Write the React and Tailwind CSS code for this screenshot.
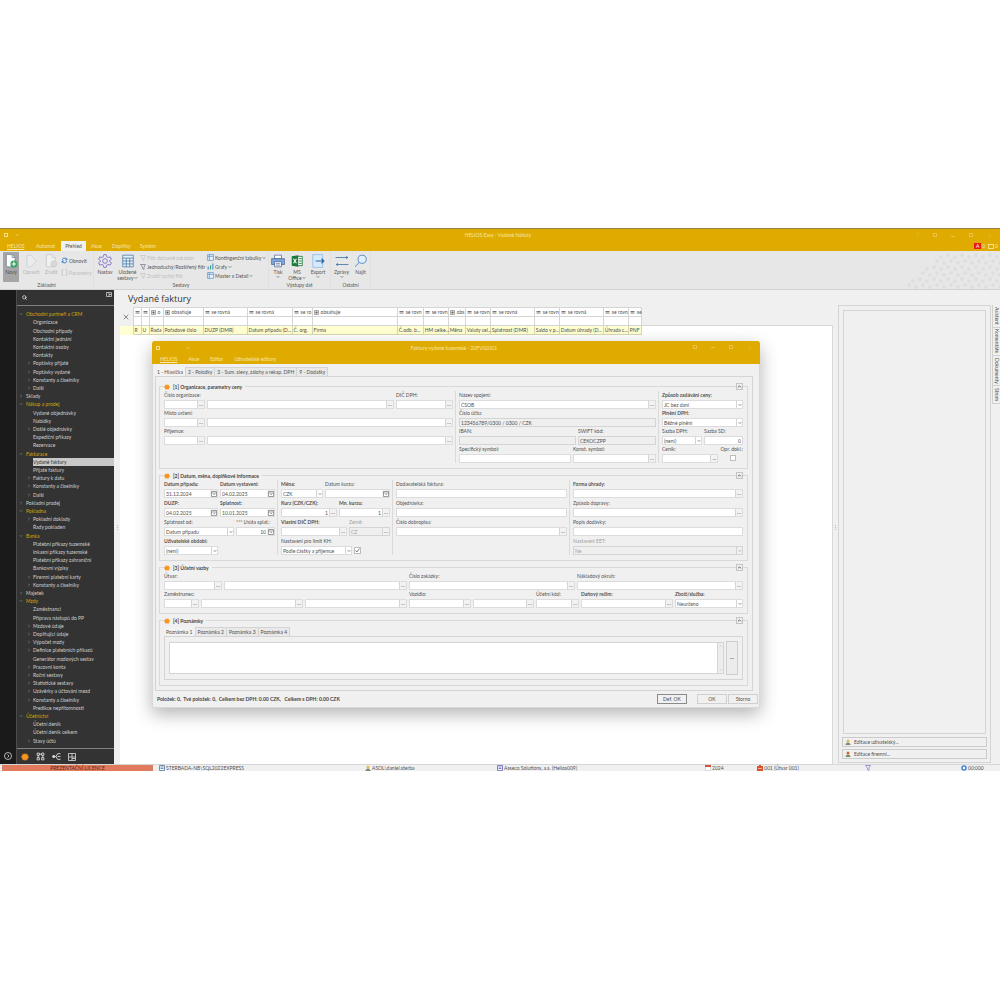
import React, { useId } from "react";
import { ChevronDown, ChevronRight, ChevronUp, Search, X } from "lucide-react";

const TREE = [
  { name: "Obchodní partneři a CRM", items: ["Organizace", "Obchodní případy", "Kontaktní jednání", "Kontaktní osoby", "Kontakty", "+Poptávky přijaté", "+Poptávky vydané", "+Konstanty a číselníky", "+Další"] },
  { name: "Sklady", items: [] },
  { name: "Nákup a prodej", items: ["Vydané objednávky", "Nabídky", "+Došlé objednávky", "Expediční příkazy", "Rezervace"] },
  { name: "Fakturace", items: ["Vydané faktury", "Přijaté faktury", "+Faktury k datu", "+Konstanty a číselníky", "+Další"] },
  { name: "Pokladní prodej", items: [] },
  { name: "Pokladna", items: ["+Pokladní doklady", "Řady pokladen"] },
  { name: "Banka", items: ["Platební příkazy tuzemské", "Inkasní příkazy tuzemské", "Platební příkazy zahraniční", "Bankovní výpisy", "+Firemní platební karty", "+Konstanty a číselníky"] },
  { name: "Majetek", items: [] },
  { name: "Mzdy", items: ["Zaměstnanci", "Příprava nástupů do PP", "+Mzdové údaje", "+Doplňující údaje", "+Výpočet mzdy", "+Definice platebních příkazů", "Generátor mzdových sestav", "+Pracovní konta", "+Roční sestavy", "+Statistické sestavy", "+Uzávěrky a účtování mezd", "+Konstanty a číselníky", "Predikce nepřítomnosti"] },
  { name: "Účetnictví", items: ["Účetní deník", "Účetní deník celkem", "+Stavy účtů"] },
];

const COLUMNS = [
  { w: 8, op: "eq", filter: "", label: "R" },
  { w: 8, op: "eq", filter: "", label: "U" },
  { w: 14, op: "in", filter: "o", label: "Řada" },
  { w: 40, op: "in", filter: "obsahuje", label: "Pořadové číslo" },
  { w: 44, op: "eq", filter: "se rovná", label: "DUZP (DMR)" },
  { w: 45, op: "eq", filter: "se rovná", label: "Datum případu (D..." },
  { w: 20, op: "eq", filter: "se ro", label: "Č. org." },
  { w: 85, op: "in", filter: "obsahuje", label: "Firma" },
  { w: 26, op: "eq", filter: "se rovn", label: "Č.odb. b..." },
  { w: 25, op: "eq", filter: "se rovn", label: "HM celke..." },
  { w: 17, op: "in", filter: "obs", label: "Měna" },
  { w: 25, op: "eq", filter: "se rovn", label: "Valuty cel..." },
  { w: 44, op: "eq", filter: "se rovná", label: "Splatnost (DMR)" },
  { w: 25, op: "eq", filter: "se rovn", label: "Saldo v p..." },
  { w: 44, op: "eq", filter: "se rovná", label: "Datum úhrady (D..." },
  { w: 25, op: "eq", filter: "se rovn", label: "Úhrada c..." },
  { w: 13, op: "eq", filter: "se", label: "PNF" },
];

function Gear({ className }) {
  return (
    <svg viewBox="0 0 16 16" className={className} aria-hidden="true">
      <path
        d="M8 0l2 3 3-2v4l3 1-2 2 2 2-3 1v4l-3-2-2 3-2-3-3 2v-4l-3-1 2-2-2-2 3-1V1l3 2z"
        fill="#f7951f"
      />
    </svg>
  );
}

/* ---------- ribbon ---------- */

function NewIcon() {
  return (
    <svg viewBox="0 0 24 24" className="size-[14px]" fill="none" strokeWidth="1.4">
      <path d="M4 1h10l5 5v16H4z" fill="#fff" stroke="#7d8794" />
      <path d="M14 1v5h5" stroke="#7d8794" />
      <circle cx="17" cy="17" r="6" fill="#2f9e5b" />
      <path d="M17 13v8M13 17h8" stroke="#fff" strokeWidth="1.8" />
    </svg>
  );
}

function EditIcon() {
  return (
    <svg viewBox="0 0 24 24" className="size-[14px]" fill="#ececee" stroke="#d2d2d6" strokeWidth="1.6">
      <path d="M5 2h7l9 10-9 10H5z" />
    </svg>
  );
}

function DeleteIcon() {
  return (
    <svg viewBox="0 0 24 24" className="size-[14px]" fill="#f0f0f0" stroke="#ccccd0" strokeWidth="1.6">
      <path d="M4 1h10l5 5v16H4z" />
      <path d="M14 1v5h5" />
      <circle cx="17" cy="17" r="5" fill="#d8d8dc" />
    </svg>
  );
}

function SettingsIcon() {
  return (
    <svg viewBox="0 0 24 24" className="size-[14px]" fill="none" stroke="#8377c6" strokeWidth="1.6">
      <path d="M10 1h4l1 4 2 1 4-1 2 4-3 2v2l3 2-2 4-4-1-2 1-1 4h-4l-1-4-2-1-4 1-2-4 3-2v-2L1 9l2-4 4 1 2-1z" />
      <circle cx="12" cy="12" r="4" />
    </svg>
  );
}

function SavedIcon() {
  return (
    <svg viewBox="0 0 24 24" className="size-[14px]" fill="#e8f1fa" stroke="#4f7ba8" strokeWidth="1.4">
      <path d="M3 2h18v20H3zM3 7h18M9 7v15M15 7v15M3 12h18M3 17h18" />
    </svg>
  );
}

function PrintIcon() {
  return (
    <svg viewBox="0 0 24 24" className="size-[14px]" stroke="#44628f" strokeWidth="1.2">
      <path d="M6 2h12v6H6z" fill="#fff" />
      <path d="M1 8h22v10H1z" fill="#7fa6dc" />
      <path d="M6 13h12v9H6z" fill="#fff" />
      <path d="M8 16h8M8 19h8" />
    </svg>
  );
}

function ExcelIcon() {
  return (
    <svg viewBox="0 0 24 24" className="size-[14px]">
      <path d="M12 4h9v16h-9z" fill="#fff" stroke="#1d7a3e" strokeWidth="1.5" />
      <path d="M15 8h5M15 12h5M15 16h5" stroke="#1d7a3e" strokeWidth="1.5" />
      <path d="M3 4l11-2v20L3 20z" fill="#1d7a3e" />
      <path d="M6 8l5 8M11 8l-5 8" stroke="#fff" strokeWidth="1.8" />
    </svg>
  );
}

function ExportIcon() {
  return (
    <svg viewBox="0 0 24 24" className="size-[14px]" fill="none">
      <path d="M3 1h17v22H3z" fill="#d6eafc" stroke="#8fbce6" strokeWidth="1.4" />
      <path d="M8 12h14M18 8l4 4-4 4" stroke="#1f62a8" strokeWidth="2" />
    </svg>
  );
}

function MessagesIcon() {
  return (
    <svg viewBox="0 0 24 24" className="size-[14px]" fill="none" stroke="#3d6fa3" strokeWidth="1.4">
      <path d="M1 6h21M19 4l3 2-3 2M23 18H2M5 16l-3 2 3 2" />
    </svg>
  );
}

function FindIcon() {
  return (
    <svg viewBox="0 0 24 24" className="size-[14px]" fill="#e2effb" stroke="#4b86c6" strokeWidth="1.6">
      <circle cx="14" cy="9" r="7" />
      <path d="M9 14L2 22" />
    </svg>
  );
}

function BigButton({ icon, label, second, menu, active, disabled, width }) {
  return (
    <button
      disabled={disabled}
      className={`flex h-[30px] flex-col items-center pt-[2px] leading-[6px] ${width} ${
        active ? "bg-[#a6a6a6]" : ""
      } ${disabled ? "text-[#b4b4b4]" : "text-[#555]"}`}
    >
      {icon}
      <span className="mt-px">{label}</span>
      <span className="flex items-center">
        {second}
        {menu && <ChevronDown className="size-[4px]" strokeWidth={4} />}
      </span>
    </button>
  );
}

function SmallButton({ icon, label, menu, disabled }) {
  return (
    <button
      disabled={disabled}
      className={`flex h-[9px] items-center gap-px whitespace-nowrap ${
        disabled ? "text-[#bcbcbc]" : "text-[#555]"
      }`}
    >
      {icon}
      {label}
      {menu && <ChevronDown className="size-[4px]" strokeWidth={4} />}
    </button>
  );
}

function Funnel({ color }) {
  return (
    <svg viewBox="0 0 12 12" className="size-[6px] shrink-0" fill="none" stroke={color} strokeWidth="1.5">
      <path d="M1 1h10L8 6v5L5 9V6z" />
    </svg>
  );
}

function Pivot({ color = "#5b8fc7" }) {
  return (
    <svg viewBox="0 0 12 12" className="size-[7px] shrink-0" fill="#e6f0fa" stroke={color} strokeWidth="1.2">
      <path d="M1 1h10v10H1zM1 4h10M4 1v10" />
    </svg>
  );
}

function Brackets() {
  return (
    <svg viewBox="0 0 12 12" className="size-[7px] shrink-0" fill="none" stroke="#c4c4c8" strokeWidth="1.4">
      <path d="M4 1H2v10h2M8 1h2v10H8" />
    </svg>
  );
}

function Bars() {
  return (
    <svg viewBox="0 0 12 12" className="size-[7px] shrink-0">
      <path d="M1 6h2v5H1zM9 1h2v10H9z" fill="#4e8fd0" />
      <path d="M5 4h2v7H5z" fill="#39a36a" />
    </svg>
  );
}

function Refresh() {
  return (
    <svg viewBox="0 0 12 12" className="size-[7px] shrink-0" fill="none" stroke="#3a7fc4" strokeWidth="1.6">
      <path d="M2 5l2-3h4l2 3M10 7l-2 3H4L2 7M10 2v3H7M2 10V7h3" />
    </svg>
  );
}

function RibbonGroup({ title, width, children }) {
  return (
    <div className={`flex shrink-0 flex-col border-r border-[#e0e0e0] ${width}`}>
      <div className="flex flex-1">{children}</div>
      <div className="h-[8px] text-center leading-[7px] text-[#555]">{title}</div>
    </div>
  );
}

function Dots() {
  const dots = [];
  for (let r = 0; r < 6; r++) {
    for (let c = 0; c < 14; c++) {
      if (c * 7 < (5 - r) * 6) continue;
      dots.push(<circle key={`${r}-${c}`} cx={c * 7 + (r % 2) * 3 + 2} cy={r * 6 + 4 + (c % 2) * 2} r="2" />);
    }
  }
  return (
    <svg viewBox="0 0 96 38" className="h-[38px] w-[96px]" fill="#dedede" aria-hidden="true">
      {dots}
    </svg>
  );
}

function Ribbon() {
  return (
    <div className="flex h-[39px] border-b border-[#d2d2d2] bg-[#e7e7e7]">
      <RibbonGroup title="Základní" width="w-[94px]">
        <div className="flex gap-[3px] pl-[3px] pt-px">
          <BigButton icon={<NewIcon />} label="Nový" active width="w-[16px]" />
          <BigButton icon={<EditIcon />} label="Opravit" disabled width="w-[18px]" />
          <BigButton icon={<DeleteIcon />} label="Zrušit" disabled width="w-[16px]" />
        </div>
        <div className="flex flex-col gap-[3px] pl-[2px] pt-[5px]">
          <SmallButton icon={<Refresh />} label="Obnovit" />
          <SmallButton icon={<Brackets />} label="Parametry" disabled />
        </div>
      </RibbonGroup>
      <RibbonGroup title="Sestavy" width="w-[175px]">
        <div className="flex pt-px">
          <BigButton icon={<SettingsIcon />} label="Nastav" width="w-[22px]" />
          <BigButton icon={<SavedIcon />} label="Uložené" second="sestavy" menu width="w-[23px]" />
        </div>
        <div className="flex w-[68px] shrink-0 flex-col pl-px pt-[2px]">
          <SmallButton icon={<Funnel color="#c4c4c4" />} label="Filtr dočasně zakázán" disabled />
          <SmallButton icon={<Funnel color="#7a7a90" />} label="Jednoduchý/Rozšířený filtr" />
          <SmallButton icon={<Funnel color="#c4c4c4" />} label="Zrušit rychlý filtr" disabled />
        </div>
        <div className="flex flex-col pt-[2px]">
          <SmallButton icon={<Pivot />} label="Kontingenční tabulky" menu />
          <SmallButton icon={<Bars />} label="Grafy" menu />
          <SmallButton icon={<Pivot />} label="Master x Detail" menu />
        </div>
      </RibbonGroup>
      <RibbonGroup title="Výstupy dat" width="w-[62px]">
        <div className="flex pt-px">
          <BigButton icon={<PrintIcon />} label="Tisk" menu width="w-[18px]" />
          <BigButton icon={<ExcelIcon />} label="MS" second="Office" menu width="w-[20px]" />
          <BigButton icon={<ExportIcon />} label="Export" menu width="w-[22px]" />
        </div>
      </RibbonGroup>
      <RibbonGroup title="Ostatní" width="w-[40px]">
        <div className="flex pt-px">
          <BigButton icon={<MessagesIcon />} label="Zprávy" menu width="w-[21px]" />
          <BigButton icon={<FindIcon />} label="Najít" width="w-[17px]" />
        </div>
      </RibbonGroup>
      <div className="flex flex-1 items-end justify-end">
        <Dots />
      </div>
    </div>
  );
}

/* ---------- left navigation ---------- */

function TreeRow({ text, depth, open, selected }) {
  const more = text.startsWith("+");
  const caret = "size-[4px] shrink-0 text-[#a0a0a0]";
  return (
    <li className={`flex flex-1 items-center whitespace-nowrap ${depth ? "pl-[10px]" : "pl-[2px]"}`}>
      {depth === 0 && (open ? <ChevronDown className={caret} strokeWidth={3} /> : <ChevronRight className={caret} strokeWidth={3} />)}
      {depth === 1 && (more ? <ChevronRight className={caret} strokeWidth={3} /> : <span className="w-[4px]" />)}
      <a
        href="#"
        className={`flex h-full flex-1 items-center ${depth ? "ml-[2px]" : "ml-[3px]"} ${
          selected ? "bg-[#c8c8c8] text-[#333]" : open ? "text-[#d3a30c]" : "text-[#cfcfcf]"
        }`}
      >
        {more ? text.slice(1) : text}
      </a>
    </li>
  );
}

function Navigation() {
  return (
    <nav className="flex w-[98px] shrink-0 flex-col border-l border-[#4c4c4c] bg-[#333]">
      <div className="flex h-[16px] items-start justify-between border-b border-[#808080] px-[2px]">
        <Search className="ml-[3px] mt-[5px] size-[5px] text-white" strokeWidth={3} />
        <svg viewBox="0 0 12 10" className="mt-[2px] h-[5px] w-[6px]" fill="none" stroke="#ccc" strokeWidth="1.6">
          <path d="M1 1h10v8H1zM6 1v8M6 5h5" />
        </svg>
      </div>
      <ul className="mt-[4px] flex h-[435px] flex-col">
        {TREE.map((g) => (
          <React.Fragment key={g.name}>
            <TreeRow text={g.name} depth={0} open={g.items.length > 0} />
            {g.items.map((it) => (
              <TreeRow key={it} text={it} depth={1} selected={it === "Vydané faktury"} />
            ))}
          </React.Fragment>
        ))}
      </ul>
      <div className="mt-[3px] flex h-[16px] items-center gap-[7px] border-t border-[#808080] pl-[4px]">
        <Gear className="size-[8px]" />
        <svg viewBox="0 0 16 16" className="size-[9px]" fill="none" stroke="#ddd" strokeWidth="1.6">
          <path d="M2 2h4v4H2zM10 2h4v4h-4zM2 10h4v4H2zM10 10h4v4h-4zM6 4h4M4 6v4M12 6v4" />
        </svg>
        <svg viewBox="0 0 16 16" className="size-[9px]" fill="none" stroke="#ddd" strokeWidth="1.6">
          <path d="M1 8h6M7 8l3-5h5M7 8l3 5h5M10 8h5" />
          <circle cx="3" cy="8" r="2" fill="#ddd" />
        </svg>
        <svg viewBox="0 0 16 16" className="size-[8px]" fill="none" stroke="#ddd" strokeWidth="1.6">
          <path d="M1 1h14v14H1zM8 1v14M1 8h14M8 11h7" />
        </svg>
      </div>
    </nav>
  );
}

/* ---------- invoice grid ---------- */

function Operator({ op }) {
  return (
    <svg viewBox="0 0 10 10" className="size-[5px] shrink-0" fill="none" stroke="#555" strokeWidth="1.6">
      {op === "eq" ? (
        <path d="M1 3h8M1 6h8" />
      ) : (
        <>
          <path d="M1 1h8v8H1z" strokeWidth="1" />
          <path d="M3 3h4v4H3z" fill="#555" stroke="none" />
        </>
      )}
    </svg>
  );
}

function InvoiceGrid() {
  return (
    <table className="w-[522px] shrink-0 table-fixed border-collapse text-left">
      <colgroup>
        <col className="w-[13px]" />
        {COLUMNS.map((c) => (
          <col key={c.label} style={{ width: c.w }} />
        ))}
      </colgroup>
      <tbody>
        <tr className="h-[9px] bg-white">
          <td rowSpan={2} className="border-r border-[#d5d5d5] bg-[#f0f0f0]">
            <X className="mx-auto size-[8px] text-[#555]" />
          </td>
          {COLUMNS.map((c) => (
            <td key={c.label} className="border border-[#d5d5d5] px-px leading-[6px] whitespace-nowrap">
              <span className="flex items-center gap-[2px]">
                <Operator op={c.op} />
                {c.filter}
              </span>
            </td>
          ))}
        </tr>
        <tr className="h-[9px] bg-white">
          {COLUMNS.map((c) => (
            <td key={c.label} className="border border-[#d5d5d5]" />
          ))}
        </tr>
        <tr className="h-[9px] bg-[#ffffd2]">
          <th />
          {COLUMNS.map((c) => (
            <th key={c.label} className="border border-[#d8d8b0] px-px leading-[6px] font-normal whitespace-nowrap">
              {c.label}
            </th>
          ))}
        </tr>
      </tbody>
    </table>
  );
}

/* ---------- form fields ---------- */

function Calendar() {
  return (
    <svg viewBox="0 0 12 12" className="size-[6px]" fill="#fff" stroke="#777" strokeWidth="1.4">
      <path d="M1 1h10v10H1zM1 4h10M5 7h3" />
    </svg>
  );
}

function Field({ label, value = "", kind = "text", bold, right, disabled, readOnly, className = "" }) {
  const id = useId();
  const box = disabled || readOnly ? "border-[#d4d4d4] bg-[#efefef]" : "border-[#dcdcdc] bg-white";
  return (
    <div className={`flex min-w-0 flex-col ${className}`}>
      <label
        htmlFor={id}
        className={`h-[9px] leading-[8px] whitespace-nowrap ${bold ? "font-bold" : ""} ${
          disabled ? "text-[#a2a2a2]" : "text-[#505050]"
        }`}
      >
        {label}
      </label>
      <div className={`flex h-[9px] border ${box} ${disabled ? "text-[#a2a2a2]" : ""}`}>
        {kind === "select" ? (
          <>
            <select
              id={id}
              disabled={disabled}
              className="min-w-0 flex-1 appearance-none px-px leading-[6px]"
              defaultValue={value}
            >
              <option>{value}</option>
            </select>
            <span className="flex w-[6px] items-center justify-center border-l border-[#d4d4d4]">
              <ChevronDown className="size-[4px]" strokeWidth={4} />
            </span>
          </>
        ) : (
          <input
            id={id}
            type="text"
            defaultValue={value}
            disabled={disabled}
            readOnly={readOnly}
            className={`w-0 min-w-0 flex-1 px-px leading-[6px] ${right ? "text-right" : ""}`}
          />
        )}
        {kind === "lookup" && (
          <button
            aria-label="Vybrat"
            className="flex w-[7px] items-center justify-center border-l border-[#d4d4d4] bg-[#f2f2f2] leading-[6px] text-[#888]"
          >
            ···
          </button>
        )}
        {(kind === "date" || kind === "spin") && (
          <button aria-label="Kalendář" className="flex w-[7px] items-center justify-center bg-[#f0f0f0]">
            <Calendar />
          </button>
        )}
      </div>
    </div>
  );
}

function Row({ children }) {
  return <div className="flex gap-[2px]">{children}</div>;
}

function Group({ title, children }) {
  return (
    <section className="border border-[#d9d9d9] px-1 pb-[5px]">
      <header className="-mt-[5px] flex h-[9px] items-center justify-between">
        <h3 className="flex items-center gap-[3px] bg-[#f0f0f0] pr-[3px] font-bold text-[#444]">
          <Gear className="size-[6px]" />
          {title}
        </h3>
        <button
          aria-label="Sbalit"
          className="flex size-[7px] items-center justify-center border border-[#c4c4c4] bg-[#f0f0f0]"
        >
          <ChevronUp className="size-[5px] text-[#444]" strokeWidth={4} />
        </button>
      </header>
      {children}
    </section>
  );
}

function Check({ label, checked }) {
  return (
    <label className="flex flex-[21] flex-col items-end whitespace-nowrap">
      <span className="h-[9px] leading-[8px]">{label}</span>
      <input
        type="checkbox"
        defaultChecked={checked}
        className="mr-[7px] mt-px size-[6px] appearance-none border border-[#bdbdbd] bg-white"
      />
    </label>
  );
}

function TabList({ tabs }) {
  return (
    <div role="tablist" className="flex h-[9px]">
      {tabs.map((t, i) => (
        <button
          key={t}
          role="tab"
          aria-selected={i === 0}
          className={`border-r border-[#d4d4d4] px-[2px] leading-[8px] whitespace-nowrap ${
            i === 0 ? "bg-[#f2f2f2]" : "border-t bg-[#e9e9e9]"
          }`}
        >
          {t}
        </button>
      ))}
    </div>
  );
}

function InvoiceDialog() {
  return (
    <div
      role="dialog"
      aria-label="Faktury vydané tuzemské"
      className="absolute top-[51px] right-[240px] left-[152px] rounded-t-[3px] border border-t-0 border-[#d8d8d8] bg-[#f0f0f0] shadow-[0_6px_18px_rgba(0,0,0,0.3)]"
    >
      <div className="-mx-px h-[23px] rounded-t-[3px] bg-[#e0ab00] text-[#f7e6ad]">
        <div className="flex h-[13px] items-center">
          <div className="flex flex-1 items-center gap-[26px] pl-[4px]">
            <span className="size-[4px] border border-[#f7de8a]" />
            <ChevronDown className="size-[4px]" strokeWidth={4} />
          </div>
          <span>Faktury vydané tuzemské - 20FV00001</span>
          <div className="flex flex-1 justify-end gap-[14px] pr-[8px] opacity-30">
            <span className="size-[4px] border border-white" />
            <span className="h-[3px] w-[4px] border-b border-white" />
            <span className="size-[4px] border border-white" />
            <X className="size-[5px]" />
          </div>
        </div>
        <div className="flex h-[9px] items-center gap-[11px] pl-[8px]">
          <a href="#" className="underline">HELIOS</a>
          <a href="#">Akce</a>
          <a href="#">Editor</a>
          <a href="#">Uživatelské editory</a>
        </div>
      </div>

      <div className="pt-[3px] pr-[6px] pl-[2px]">
        <TabList tabs={["1 - Hlavička", "2 - Položky", "3 - Sum. slevy, zálohy a rekap. DPH", "9 - Dodatky"]} />
        <div className="flex flex-col gap-[6px] border border-[#d4d4d4] pt-[9px] pr-1 pb-1 pl-[3px]">
          <Group title="[1] Organizace, parametry ceny">
            <div className="flex gap-[2px]">
              <div className="min-w-0 flex-[289]">
                <Row>
                  <Field label="Číslo organizace:" kind="lookup" className="flex-[41]" />
                  <Field label="" kind="lookup" className="flex-[187]" />
                  <Field label="DIČ DPH:" kind="lookup" className="flex-[57]" />
                </Row>
                <Row>
                  <Field label="Místo určení:" kind="lookup" className="flex-[41]" />
                  <Field label="" kind="lookup" className="flex-[246]" />
                </Row>
                <Row>
                  <Field label="Příjemce:" kind="lookup" className="flex-[41]" />
                  <Field label="" kind="lookup" className="flex-[246]" />
                </Row>
              </div>
              <div className="min-w-0 flex-[197] border-l border-[#dadada] pl-[3px]">
                <Field label="Název spojení:" value="ČSOB" kind="lookup" />
                <Field label="Číslo účtu:" value="123456789/0300 / 0300 / CZK" readOnly />
                <Row>
                  <Field label="IBAN:" readOnly className="flex-[117]" />
                  <Field label="SWIFT kód:" value="CEKOCZPP" readOnly className="flex-[78]" />
                </Row>
                <Row>
                  <Field label="Specifický symbol:" className="flex-[112]" />
                  <Field label="Konst. symbol:" kind="lookup" className="flex-[83]" />
                </Row>
              </div>
              <div className="min-w-0 flex-[81] border-l border-[#dadada] pl-[3px]">
                <Field label="Způsob zadávání ceny:" value="JC bez daní" kind="select" bold />
                <Field label="Plnění DPH:" value="Běžné plnění" kind="select" bold />
                <Row>
                  <Field label="Sazba DPH:" value="(není)" kind="select" className="flex-[40]" />
                  <Field label="Sazba SD:" value="0" right className="flex-[39]" />
                </Row>
                <Row>
                  <Field label="Ceník:" kind="lookup" className="flex-[58]" />
                  <Check label="Opr. dokl.:" />
                </Row>
              </div>
            </div>
          </Group>

          <Group title="[2] Datum, měna, doplňkové informace">
            <div className="flex gap-[2px]">
              <div className="flex min-w-0 flex-[111] flex-col gap-px">
                <Row>
                  <Field label="Datum případu:" value="31.12.2024" kind="date" bold className="flex-[54]" />
                  <Field label="Datum vystavení:" value="04.02.2025" kind="date" bold className="flex-[55]" />
                </Row>
                <Row>
                  <Field label="DUZP:" value="04.02.2025" kind="date" bold className="flex-[54]" />
                  <Field label="Splatnost:" value="10.01.2025" kind="date" bold className="flex-[55]" />
                </Row>
                <Row>
                  <Field label="Splatnost od:" value="Datum případu" kind="select" className="flex-[70]" />
                  <Field label="*** Lhůta splat.:" value="10" kind="spin" right className="flex-[39]" />
                </Row>
                <Row>
                  <Field label="Uživatelské období:" value="(není)" kind="select" bold className="flex-[54]" />
                  <div className="flex-[55]" />
                </Row>
              </div>
              <div className="flex min-w-0 flex-[109] flex-col gap-px border-l border-[#dadada] pl-[3px]">
                <Row>
                  <Field label="Měna:" value="CZK" kind="select" bold className="flex-[42]" />
                  <Field label="Datum kurzu:" kind="date" className="flex-[65]" />
                </Row>
                <Row>
                  <Field label="Kurz (CZK/CZK):" value="1" kind="lookup" right bold className="flex-[56]" />
                  <Field label="Mn. kurzu:" value="1" kind="lookup" right bold className="flex-[51]" />
                </Row>
                <Row>
                  <Field label="Vlastní DIČ DPH:" kind="lookup" bold className="flex-[66]" />
                  <Field label="Země:" value="CZ" kind="lookup" disabled className="flex-[41]" />
                </Row>
                <Row>
                  <Field label="Nastavení pro limit KH:" value="Podle částky a příjemce" kind="select" className="flex-[71]" />
                  <div className="flex flex-[36] items-end pb-px">
                    <label className="grid size-[7px] place-items-center border border-[#bdbdbd] bg-white">
                      <input type="checkbox" aria-label="Limit KH" defaultChecked className="col-start-1 row-start-1 size-[5px] appearance-none" />
                      <svg viewBox="0 0 10 10" className="col-start-1 row-start-1 size-[5px]" fill="none" stroke="#555" strokeWidth="1.5">
                        <path d="M1 5l3 3 5-7" />
                      </svg>
                    </label>
                  </div>
                </Row>
              </div>
              <div className="flex min-w-0 flex-[171] flex-col gap-px border-l border-[#dadada] pl-[3px]">
                <Field label="Dodavatelská faktura:" />
                <Field label="Objednávka:" />
                <Field label="Číslo dobropisu:" kind="lookup" />
              </div>
              <div className="flex min-w-0 flex-[170] flex-col gap-px border-l border-[#dadada] pl-[3px]">
                <Field label="Forma úhrady:" kind="lookup" bold />
                <Field label="Způsob dopravy:" kind="lookup" />
                <Field label="Popis dodávky:" />
                <Field label="Nastavení EET:" value="Ne" kind="select" disabled />
              </div>
            </div>
          </Group>

          <Group title="[3] Účetní vazby">
            <Row>
              <Field label="Útvar:" kind="lookup" className="flex-[58]" />
              <Field label="" kind="lookup" className="flex-[183]" />
              <Field label="Číslo zakázky:" kind="lookup" className="flex-[166]" />
              <Field label="Nákladový okruh:" kind="lookup" className="flex-[166]" />
            </Row>
            <Row>
              <Field label="Zaměstnanec:" kind="lookup" className="flex-[35]" />
              <Field label="" kind="lookup" className="flex-[102]" />
              <Field label="" kind="lookup" className="flex-[102]" />
              <Field label="Vozidlo:" kind="lookup" className="flex-[62]" />
              <Field label="" kind="lookup" className="flex-[61]" />
              <Field label="Účetní kód:" kind="lookup" className="flex-[43]" />
              <Field label="Daňový režim:" kind="lookup" bold className="flex-[92]" />
              <Field label="Zboží/služba:" value="Neurčeno" kind="select" bold className="flex-[68]" />
            </Row>
          </Group>

          <Group title="[4] Poznámky">
            <div className="pt-[2px]">
              <TabList tabs={["Poznámka 1", "Poznámka 2", "Poznámka 3", "Poznámka 4"]} />
              <div className="flex gap-[2px] border border-[#d4d4d4] p-[4px]">
                <textarea
                  aria-label="Poznámka 1"
                  className="my-px h-[32px] flex-1 resize-none overflow-y-hidden border border-[#d4d4d4] bg-white"
                />
                <div className="my-px -ml-[2px] flex w-[6px] flex-col items-center justify-between border border-l-0 border-[#d4d4d4] bg-[#ededed] py-px">
                  <ChevronUp className="size-[4px] text-[#aaa]" />
                  <ChevronDown className="size-[4px] text-[#aaa]" />
                </div>
                <button className="w-[12px] border border-[#cfcfcf] bg-[#ececec]">···</button>
              </div>
            </div>
          </Group>
        </div>
      </div>

      <footer className="flex h-[16px] items-center gap-px pr-px pl-[4px]">
        <p className="flex-1 font-bold whitespace-pre text-[#444]">
          {"Položek: 0,  Tvé položek: 0,  Celkem bez DPH: 0.00 CZK,   Celkem s DPH: 0.00 CZK"}
        </p>
        <button className="mr-[9px] h-[10px] w-[30px] border border-[#8a8a8a] bg-[#f0f0f0]">Def. OK</button>
        <button className="h-[10px] w-[30px] border border-[#d0d0d0] bg-[#f0f0f0]">OK</button>
        <button className="h-[10px] w-[30px] border border-[#d0d0d0] bg-[#f0f0f0]">Storno</button>
      </footer>
    </div>
  );
}

/* ---------- assistant panel and status bar ---------- */

const SIDE_TABS = [
  { name: "Asistent", height: "h-[23px]" },
  { name: "Komentáře", height: "h-[28px]" },
  { name: "Dokumenty", height: "h-[30px]" },
  { name: "Strom", height: "h-[18px]" },
];

function Person({ color }) {
  return (
    <svg viewBox="0 0 12 12" className="size-[6px] shrink-0">
      <circle cx="6" cy="4" r="3" fill={color} />
      <path d="M1 12c0-7 10-7 10 0z" fill="#7c8b68" />
    </svg>
  );
}

function Assistant() {
  return (
    <>
      <aside className="mt-[15px] mb-px flex w-[153px] shrink-0 flex-col gap-[2px] border border-[#d4d4d4] p-[3px]">
        <div className="m-px flex-1 border border-[#d4d4d4]" />
        <button className="flex h-[10px] items-center gap-[3px] border border-[#cbcbcb] px-[2px]">
          <Person color="#e3b65e" /> Editace uživatelský...
        </button>
        <button className="flex h-[10px] items-center gap-[3px] border border-[#cbcbcb] px-[2px]">
          <Person color="#c96a35" /> Editace firemní...
        </button>
      </aside>
      <div className="mt-[15px] flex w-[9px] shrink-0 flex-col items-end">
        {SIDE_TABS.map((t) => (
          <button
            key={t.name}
            className={`flex w-[8px] items-center justify-center border-b border-l border-[#d0d0d0] ${t.height}`}
          >
            <span className="leading-[6px] whitespace-nowrap [writing-mode:vertical-rl]">{t.name}</span>
          </button>
        ))}
      </div>
    </>
  );
}

function Square({ color }) {
  return (
    <svg viewBox="0 0 12 12" className="size-[6px] shrink-0" fill="#fff" stroke={color} strokeWidth="1.8">
      <path d="M1 1h10v10H1zM3 4h6M3 7h6" />
    </svg>
  );
}

function CalendarBadge() {
  return (
    <svg viewBox="0 0 12 12" className="size-[6px] shrink-0" fill="#fff" stroke="#bbb">
      <path d="M1 1h10v10H1z" />
      <path d="M0 0h12v4H0z" fill="#d2533f" stroke="none" />
    </svg>
  );
}

function UnitBadge() {
  return (
    <svg viewBox="0 0 12 12" className="size-[6px] shrink-0" fill="#d9532c">
      <path d="M4 0h4v2h4v10H0V2h4z" />
      <path d="M2 6h8v1H2z" fill="#fff" />
    </svg>
  );
}

function StatusBar() {
  const cell = "flex items-center gap-px whitespace-nowrap";
  return (
    <footer className="flex h-[7px] border-t border-[#d6d6d6] bg-[#f0f0f0] pl-[2px] leading-[6px]">
      <div className="flex-[151] bg-[#e07b5e] text-center text-[#5c2214]">PREZENTAČNÍ LICENCE</div>
      <div className={`${cell} flex-[206] pl-[6px]`}><Square color="#5f7fae" />STERBADA-NB\SQL2022EXPRESS</div>
      <div className={`${cell} flex-[132]`}><Person color="#e3b65e" />ASOL\daniel.sterba</div>
      <div className={`${cell} flex-[208]`}><Square color="#6d74c4" />Asseco Solutions, a.s. (Helios009)</div>
      <div className={`${cell} flex-[52]`}><CalendarBadge />2024</div>
      <div className={`${cell} flex-[108]`}><UnitBadge />001 (Útvar 001)</div>
      <div className={`${cell} flex-[96]`}><Funnel color="#7a82c8" /></div>
      <div className={`${cell} flex-[39]`}>
        <svg viewBox="0 0 12 12" className="size-[6px]"><circle cx="6" cy="6" r="4" fill="#fff" stroke="#3f86d8" strokeWidth="3" /></svg>
        00:000
      </div>
    </footer>
  );
}

export default function App() {
  return (
    <div className="flex min-h-screen flex-col justify-center bg-white pb-px font-['Lato','Noto_Sans',sans-serif] text-[5px] leading-[6px] text-[#505050]">
      <header className="h-[23px] border-t border-[#9a8340] bg-[#e0ab00] text-[#f7e6ad]">
        <div className="flex h-[12px] items-center">
          <div className="flex flex-1 items-center gap-[7px] pl-[4px]">
            <span className="size-[4px] border border-[#f7de8a]" />
            <ChevronDown className="size-[4px]" strokeWidth={4} />
          </div>
          <span>HELIOS Easy - Vydané faktury</span>
          <div className="flex flex-1 items-center justify-end gap-[14px] pr-[8px] opacity-30">
            <span>?</span>
            <span className="size-[4px] border border-white" />
            <span className="h-[3px] w-[4px] border-b border-white" />
            <span className="size-[4px] border border-white" />
            <X className="size-[5px]" />
          </div>
        </div>
        <div className="flex h-[10px] items-center">
          <a href="#" className="ml-[7px] w-[29px] underline">HELIOS</a>
          <a href="#" className="w-[25px]">Automat</a>
          <a href="#" className="flex h-full w-[25px] items-center justify-center bg-[#f0f0f0] text-[#505050]">Přehled</a>
          <a href="#" className="ml-[5px] w-[21px]">Akce</a>
          <a href="#" className="w-[28px]">Doplňky</a>
          <a href="#">Systém</a>
          <div className="flex flex-1 items-center justify-end gap-px pr-[2px]">
            <span className="flex h-[6px] w-[7px] items-center justify-center bg-[#e81c10] text-white">A</span>
            <span className="mr-[2px]">0</span>
            <span className="h-[5px] w-[6px] border border-[#f7de8a]" />
            <span>0</span>
          </div>
        </div>
      </header>
      <Ribbon />

      <main className="relative flex bg-[#f0f0f0]">
        <div className="flex w-[16px] shrink-0 flex-col items-center justify-end bg-[#1a1a1a] pb-[4px]">
          <svg viewBox="0 0 16 16" className="size-[8px]" fill="none" stroke="#e6e6e6" strokeWidth="1.5">
            <circle cx="8" cy="8" r="7" />
            <path d="M7 5l3 3-3 3" />
          </svg>
        </div>
        <Navigation />
        <div className="flex w-[6px] shrink-0 items-center justify-center text-[#888]">⋮</div>
        <div className="flex min-w-0 flex-1 flex-col">
          <h1 className="h-[17px] pl-[8px] font-['Open_Sans','Noto_Sans',sans-serif] text-[9px] leading-[17px] text-[#333]">
            Vydané faktury
          </h1>
          <div className="flex">
            <InvoiceGrid />
            <div className="mt-[18px] flex-1 border-t border-r border-[#d8d8d8] bg-white" />
          </div>
          <div className="flex-1 border-r border-[#d8d8d8] bg-white" />
        </div>
        <div className="flex w-[5px] shrink-0 items-center justify-center text-[#888]">⋮</div>
        <Assistant />
        <InvoiceDialog />
      </main>
      <StatusBar />
    </div>
  );
}
